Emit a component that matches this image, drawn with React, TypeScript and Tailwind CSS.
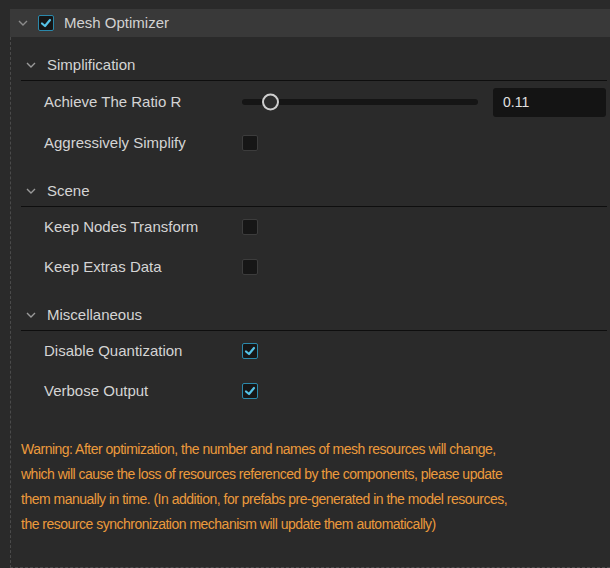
import { useState } from 'react';

const font = { fontFamily: '"Liberation Sans", Arial, sans-serif' };

function Chevron({ className }: { className?: string }) {
  return (
    <svg width="10" height="6" viewBox="0 0 10 6" className={className}>
      <polyline points="1,1 5,5 9,1" fill="none" stroke="currentColor" strokeWidth="1.4" />
    </svg>
  );
}

function Check({ checked, accent }: { checked: boolean; accent?: boolean }) {
  return (
    <div
      className={`w-4 h-4 rounded-[2px] border flex items-center justify-center bg-[#161616] ${
        checked || accent ? 'border-[#2b88aa]' : 'border-[#3c3c3c]'
      }`}
    >
      {checked && (
        <svg width="12" height="12" viewBox="0 0 12 12">
          <polyline points="2,6.5 5,9 10,3" fill="none" stroke="#56c2e6" strokeWidth="2.2" strokeLinecap="round" strokeLinejoin="round" />
        </svg>
      )}
    </div>
  );
}

function SectionHeader({ title }: { title: string }) {
  return (
    <div className="h-[30px] flex items-center border-b border-[#0e0e0e] pb-[1px]">
      <Chevron className="ml-[5px] text-[#9a9a9a]" />
      <span className="ml-[11px] text-[15px] text-[#d4d4d4]">{title}</span>
    </div>
  );
}

function Row({ label, children, tall }: { label: string; children: React.ReactNode; tall?: boolean }) {
  return (
    <div className={`${tall ? 'h-[42px]' : 'h-10'} flex items-center`}>
      <span className="w-[221px] pl-[23px] text-[15px] text-[#d4d4d4]">{label}</span>
      {children}
    </div>
  );
}

export default function App() {
  const [ratio] = useState(0.11);
  const [flags, setFlags] = useState({ aggressive: false, nodes: false, extras: false, quant: true, verbose: true });
  const toggle = (k: keyof typeof flags) => setFlags({ ...flags, [k]: !flags[k] });

  return (
    <div className="w-[610px] h-[568px] bg-[#2a2a2a] pt-[9px] pl-[10px] overflow-hidden" style={font}>
      <div className="h-[28px] bg-[#393939] flex items-center">
        <Chevron className="ml-[8px] text-[#8c8c8c]" />
        <div className="ml-[10px]">
          <Check checked accent />
        </div>
        <span className="ml-[10px] text-[15px] text-[#d2d2d2]">Mesh Optimizer</span>
      </div>

      <div className="h-[531px] border-l border-b border-dashed border-[#4a4a4a] pl-[10px] pr-[3px] pt-[14px]">
        <SectionHeader title="Simplification" />
        <Row label="Achieve The Ratio R" tall>
          <div className="w-[236px] h-[6px] rounded-full bg-[#151515] relative">
            <div className="absolute w-[17px] h-[17px] rounded-full border-2 border-[#cfcfcf] bg-[#2c2c2c] top-1/2 -translate-y-1/2 left-[20px]" />
          </div>
          <div className="ml-[15px] w-[113px] h-[29px] rounded-[3px] bg-[#141414] flex items-center px-[10px] text-[14px] text-[#e0e0e0]">
            {ratio}
          </div>
        </Row>
        <Row label="Aggressively Simplify">
          <button onClick={() => toggle('aggressive')}>
            <Check checked={flags.aggressive} />
          </button>
        </Row>

        <div className="mt-[14px]">
          <SectionHeader title="Scene" />
        </div>
        <Row label="Keep Nodes Transform">
          <button onClick={() => toggle('nodes')}>
            <Check checked={flags.nodes} />
          </button>
        </Row>
        <Row label="Keep Extras Data">
          <button onClick={() => toggle('extras')}>
            <Check checked={flags.extras} />
          </button>
        </Row>

        <div className="mt-[14px]">
          <SectionHeader title="Miscellaneous" />
        </div>
        <Row label="Disable Quantization">
          <button onClick={() => toggle('quant')}>
            <Check checked={flags.quant} />
          </button>
        </Row>
        <Row label="Verbose Output">
          <button onClick={() => toggle('verbose')}>
            <Check checked={flags.verbose} />
          </button>
        </Row>

        <p className="mt-[26px] w-[492px] text-[14px] tracking-[-0.5px] leading-[25px] text-[#ec9a3c]">
          Warning: After optimization, the number and names of mesh resources will change, which will cause the loss of
          resources referenced by the components, please update them manually in time. (In addition, for prefabs
          pre-generated in the model resources, the resource synchronization mechanism will update them automatically)
        </p>
      </div>
    </div>
  );
}
